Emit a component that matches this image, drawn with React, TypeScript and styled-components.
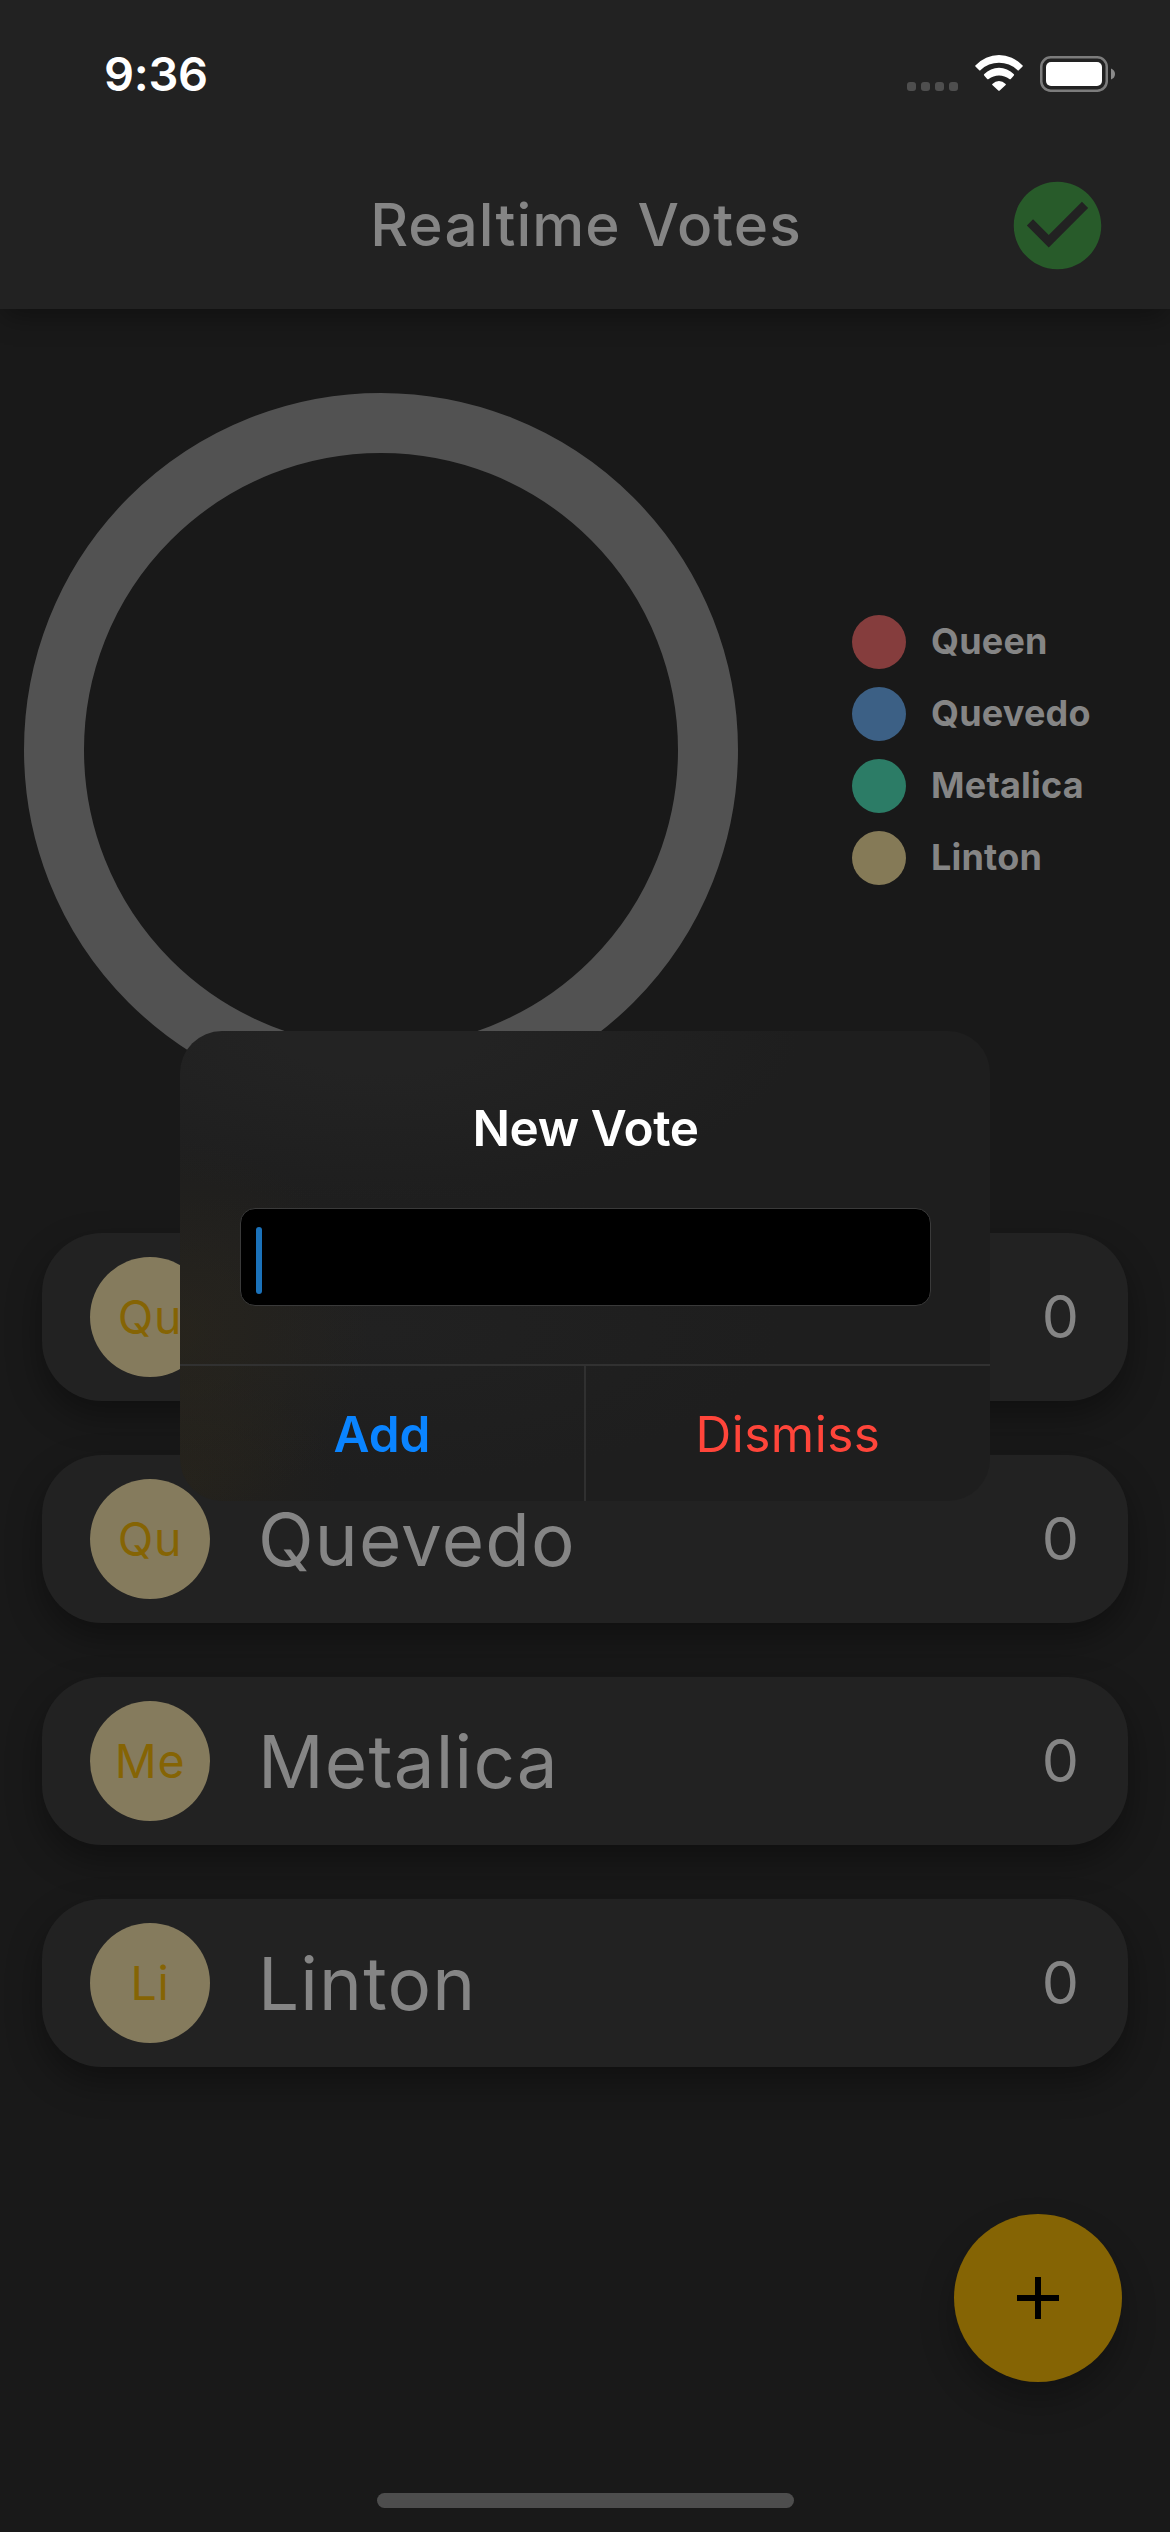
import React from "react";
import styled, { createGlobalStyle } from "styled-components";

const GlobalStyle = createGlobalStyle`
  *, *::before, *::after { box-sizing: border-box; }
  html, body { margin: 0; padding: 0; background: #191919; }
  body { font-family: Inter, Roboto, "Liberation Sans", sans-serif; -webkit-font-smoothing: antialiased; }
  button, input { font-family: inherit; border: 0; margin: 0; padding: 0; background: none; }
`;

const Screen = styled.div`
  position: relative;
  display: flex;
  flex-direction: column;
  width: 1170px;
  height: 2532px;
  overflow: hidden;
  background: #191919;
  color: #858585;
`;

const Header = styled.header`
  flex: none;
  height: 309px;
  background: #222222;
  box-shadow: 0 10px 26px -4px rgba(0, 0, 0, 0.38);
`;

const StatusBar = styled.div`
  display: flex;
  align-items: flex-start;
  justify-content: space-between;
  height: 141px;
  padding: 55px 55px 0 104px;
`;

const Clock = styled.span`
  font-size: 47px;
  font-weight: 600;
  line-height: 38px;
  letter-spacing: -0.3px;
  color: #ffffff;
`;

const StatusIcons = styled.div`
  display: flex;
  align-items: flex-start;
`;

const SignalDots = styled.div`
  display: flex;
  gap: 5px;
  margin: 27px 17px 0 0;
`;

const SignalDot = styled.span`
  width: 9px;
  height: 9px;
  border-radius: 3px;
  background: #4e4e4e;
`;

const WifiIcon = styled.svg`
  display: block;
  width: 48px;
  height: 36px;
  margin-right: 17px;
  fill: #ffffff;
`;

const Battery = styled.svg`
  display: block;
  width: 75px;
  height: 36px;
  margin-top: 1px;
`;

const AppBar = styled.div`
  display: grid;
  grid-template-columns: 165px 1fr 165px;
  align-items: center;
  height: 168px;
`;

const Title = styled.h1`
  grid-column: 2;
  margin: 0;
  padding-left: 2px;
  text-align: center;
  white-space: nowrap;
  font-size: 58.5px;
  font-weight: 500;
  letter-spacing: 1.1px;
  line-height: 72px;
`;

const CheckIcon = styled.svg`
  display: block;
  width: 105px;
  height: 105px;
  fill: #285b2a;
`;

const Chart = styled.section`
  display: flex;
  align-items: center;
  gap: 114px;
  padding: 84px 0 126px 24px;
`;

const Ring = styled.div`
  flex: none;
  width: 714px;
  height: 714px;
  border: 60px solid #525252;
  border-radius: 50%;
`;

const Legend = styled.ul`
  display: flex;
  flex-direction: column;
  gap: 18px;
  margin: 0;
  padding: 0;
  list-style: none;
`;

const LegendItem = styled.li`
  display: flex;
  align-items: center;
  gap: 25px;
  height: 54px;
  font-size: 36px;
  font-weight: 700;
  line-height: 44px;
  letter-spacing: 0.2px;
  white-space: nowrap;
`;

const LegendLabel = styled.span`
  padding-bottom: 2px;
`;

const LegendDot = styled.span<{ $color: string }>`
  width: 54px;
  height: 54px;
  border-radius: 50%;
  background: ${(p) => p.$color};
`;

const List = styled.main`
  display: flex;
  flex-direction: column;
  gap: 54px;
  padding: 0 42px;
`;

const Card = styled.article`
  display: flex;
  align-items: center;
  height: 168px;
  padding: 0 49px 0 48px;
  border-radius: 60px;
  background: #222222;
  box-shadow: 0 15px 34px rgba(0, 0, 0, 0.36);
`;

const Avatar = styled.div`
  display: flex;
  align-items: center;
  justify-content: center;
  width: 120px;
  height: 120px;
  border-radius: 50%;
  background: #857b5d;
  color: #856404;
  font-size: 46.5px;
  letter-spacing: 0.6px;
`;

const Name = styled.span`
  flex: 1;
  padding: 2px 0 0 48px;
  font-size: 72.7px;
  letter-spacing: 1.2px;
  line-height: 88px;
`;

const Count = styled.span`
  font-size: 59px;
  line-height: 72px;
`;

const AddButton = styled.button`
  position: absolute;
  right: 48px;
  bottom: 150px;
  display: flex;
  align-items: center;
  justify-content: center;
  width: 168px;
  height: 168px;
  border-radius: 50%;
  background: #856404;
  box-shadow: 0 18px 34px rgba(0, 0, 0, 0.28);

  svg {
    display: block;
    width: 42px;
    height: 42px;
  }
`;

const HomeIndicator = styled.div`
  position: absolute;
  left: 376.5px;
  bottom: 24px;
  width: 417px;
  height: 15px;
  border-radius: 8px;
  background: #4d4d4d;
`;

const Dialog = styled.div`
  position: absolute;
  left: 180px;
  top: 1031px;
  display: flex;
  flex-direction: column;
  width: 810px;
  height: 470px;
  overflow: hidden;
  border-radius: 42px;
  background:
    radial-gradient(ellipse 190px 190px at 0 300px, rgba(46, 40, 26, 0.5), rgba(46, 40, 26, 0)),
    radial-gradient(ellipse 160px 110px at 0 450px, rgba(46, 40, 26, 0.4), rgba(46, 40, 26, 0)),
    radial-gradient(ellipse 420px 170px at 200px 0, #232323 25%, rgba(35, 35, 35, 0)),
    radial-gradient(ellipse 400px 150px at 200px 300px, #212121, rgba(33, 33, 33, 0)),
    #1e1e1e;
`;

const DialogBody = styled.div`
  display: flex;
  flex-direction: column;
  align-items: center;
  gap: 50px;
  height: 333px;
  padding: 67px 59px 0 60px;
`;

const DialogTitle = styled.h2`
  margin: 0;
  font-size: 49.5px;
  font-weight: 600;
  line-height: 60px;
  letter-spacing: -0.44px;
  color: #ffffff;
`;

const Field = styled.div`
  display: flex;
  align-items: center;
  width: 691px;
  height: 98px;
  padding: 6px 15px 0;
  border: 1px solid #3a3a3a;
  border-radius: 15px;
  background: #000000;
`;

const Caret = styled.span`
  width: 6px;
  height: 67px;
  border-radius: 3px;
  background: #1b72ba;
`;

const Actions = styled.div`
  display: flex;
  flex: 1;
  border-top: 2px solid #313131;
`;

const Action = styled.button<{ $color: string; $primary?: boolean }>`
  flex: 1;
  font-size: 49.5px;
  line-height: 60px;
  color: ${(p) => p.$color};
  font-weight: ${(p) => (p.$primary ? 600 : 400)};
  letter-spacing: ${(p) => (p.$primary ? "0" : "0.5px")};

  & + & {
    border-left: 2px solid #303030;
  }
`;

const bands = [
  { name: "Queen", color: "#853d3d", votes: 0 },
  { name: "Quevedo", color: "#3c6085", votes: 0 },
  { name: "Metalica", color: "#2c7c66", votes: 0 },
  { name: "Linton", color: "#857a57", votes: 0 },
];

export default function App() {
  return (
    <>
      <GlobalStyle />
      <Screen>
        <Header>
          <StatusBar>
            <Clock>9:36</Clock>
            <StatusIcons>
              <SignalDots>
                {[0, 1, 2, 3].map((i) => (
                  <SignalDot key={i} />
                ))}
              </SignalDots>
              <WifiIcon viewBox="0 0 144 108">
                <path d="M2 31A95 95 0 0 1 142 31Q145 33 142 35L132 45Q130 48 127 45A80 80 0 0 0 17 45Q14 48 12 45L2 35Q-1 33 2 31Z" />
                <path d="M28 57A61 61 0 0 1 116 57Q119 59 116 62L108 71Q106 74 103 72A51 51 0 0 0 41 72Q38 74 36 71L28 62Q25 59 28 57Z" />
                <path d="M53 86A26 26 0 0 1 91 86Q94 88 92 90L75 106Q72 109 69 106L52 90Q50 88 53 86Z" />
              </WifiIcon>
              <Battery viewBox="0 0 75 36">
                <rect x="1.25" y="1.25" width="65.5" height="33.5" rx="9.5" fill="none" stroke="#7c7c7c" strokeWidth="2.5" />
                <rect x="6" y="6" width="56" height="24" rx="5" fill="#ffffff" />
                <path d="M71 12.5Q75 14 75 18Q75 22 71 23.5Z" fill="#8a8a8a" />
              </Battery>
            </StatusIcons>
          </StatusBar>
          <AppBar>
            <Title>Realtime Votes</Title>
            <CheckIcon viewBox="0 0 24 24">
              <path d="M12 2C6.48 2 2 6.48 2 12s4.48 10 10 10 10-4.48 10-10S17.52 2 12 2zm-2 15l-5-5 1.41-1.41L10 14.17l7.59-7.59L19 8l-9 9z" />
            </CheckIcon>
          </AppBar>
        </Header>

        <Chart>
          <Ring />
          <Legend>
            {bands.map((b) => (
              <LegendItem key={b.name}>
                <LegendDot $color={b.color} />
                <LegendLabel>{b.name}</LegendLabel>
              </LegendItem>
            ))}
          </Legend>
        </Chart>

        <List>
          {bands.map((b) => (
            <Card key={b.name}>
              <Avatar>{b.name.slice(0, 2)}</Avatar>
              <Name>{b.name}</Name>
              <Count>{b.votes}</Count>
            </Card>
          ))}
        </List>

        <AddButton aria-label="Add band">
          <svg viewBox="0 0 42 42">
            <path d="M18 0h6v18h18v6H24v18h-6V24H0v-6h18z" fill="#000000" />
          </svg>
        </AddButton>
        <HomeIndicator />

        <Dialog role="dialog">
          <DialogBody>
            <DialogTitle>New Vote</DialogTitle>
            <Field>
              <Caret />
            </Field>
          </DialogBody>
          <Actions>
            <Action $color="#0a84ff" $primary>
              Add
            </Action>
            <Action $color="#ff453a">Dismiss</Action>
          </Actions>
        </Dialog>
      </Screen>
    </>
  );
}
